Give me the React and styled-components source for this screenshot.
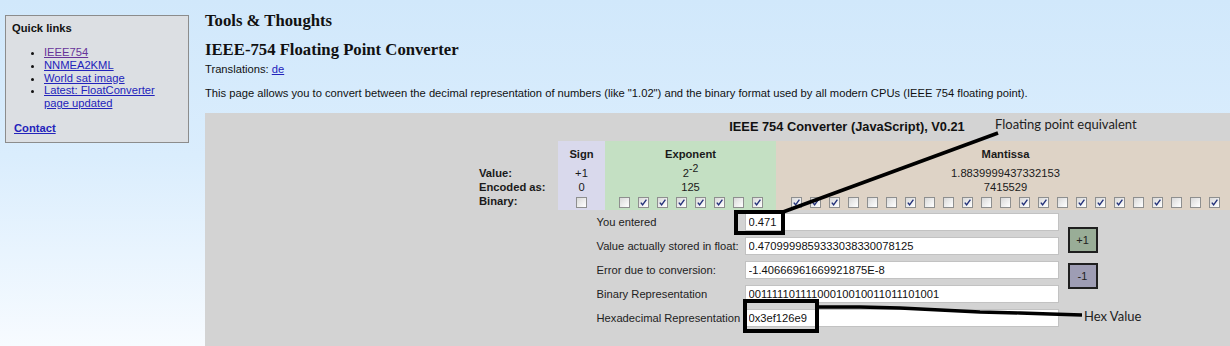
import styled, { createGlobalStyle } from "styled-components";

const GlobalStyle = createGlobalStyle`
  html, body {
    margin: 0;
    padding: 0;
    overflow: hidden;
  }
  body {
    font-family: "Liberation Sans", Arial, sans-serif;
    font-size: 11.2px;
    color: #111;
  }
`;

// bit patterns of 0.471
const exponentBits = [0, 1, 1, 1, 1, 1, 0, 1];
const mantissaBits = [1, 1, 1, 0, 0, 0, 1, 0, 0, 1, 0, 0, 1, 1, 0, 1, 1, 1, 0, 1, 0, 0, 1];

const fields = [
  ["You entered", "0.471"],
  ["Value actually stored in float:", "0.4709999859333038330078125"],
  ["Error due to conversion:", "-1.4066696166992187 5E-8".replace(" ", "")],
  ["Binary Representation", "00111110111100010010011011101001"],
  ["Hexadecimal Representation", "0x3ef126e9"],
];

const colBg = {
  label: "transparent",
  sign: "#d9d9ec",
  exp: "#c4e0c3",
  man: "#ded3c6",
};

const Check = ({ on }) => (
  <Box>
    {on ? (
      <svg width="9" height="9" viewBox="0 0 9 9">
        <path d="M1.8 4.6 L3.6 6.8 L7.4 1.6" fill="none" stroke="#24327a" strokeWidth="1.4" />
      </svg>
    ) : null}
  </Box>
);

const App = () => {
  return (
    <Page>
      <GlobalStyle />
      <Sidebar>
        <SideTitle>Quick links</SideTitle>
        <LinkList>
          <li><Link href="#" $visited>IEEE754</Link></li>
          <li><Link href="#">NNMEA2KML</Link></li>
          <li><Link href="#">World sat image</Link></li>
          <li><Link href="#">Latest: FloatConverter page updated</Link></li>
        </LinkList>
        <Contact href="#">Contact</Contact>
      </Sidebar>

      <Main>
        <SiteTitle>Tools &amp; Thoughts</SiteTitle>
        <PageTitle>IEEE-754 Floating Point Converter</PageTitle>
        <Line $top={2}>Translations: <Link href="#">de</Link></Line>
        <Line $top={10}>
          This page allows you to convert between the decimal representation of numbers (like "1.02") and the binary format used by all modern CPUs (IEEE 754 floating point).
        </Line>

        <Panel>
          <PanelTitle>IEEE 754 Converter (JavaScript), V0.21</PanelTitle>

          <BitTable>
            <Cell $col="label" $h={25} />
            <Cell $col="sign" $h={25} $head>Sign</Cell>
            <Cell $col="exp" $h={25} $head>Exponent</Cell>
            <Cell $col="man" $h={25} $head>Mantissa</Cell>

            <Cell $col="label" $h={14} $bold>Value:</Cell>
            <Cell $col="sign" $h={14}>+1</Cell>
            <Cell $col="exp" $h={14}>2<Sup>-2</Sup></Cell>
            <Cell $col="man" $h={14}>1.8839999437332153</Cell>

            <Cell $col="label" $h={14} $bold>Encoded as:</Cell>
            <Cell $col="sign" $h={14}>0</Cell>
            <Cell $col="exp" $h={14}>125</Cell>
            <Cell $col="man" $h={14}>7415529</Cell>

            <Cell $col="label" $h={16} $bold>Binary:</Cell>
            <Cell $col="sign" $h={16}><Checks><Check on={0} /></Checks></Cell>
            <Cell $col="exp" $h={16}>
              <Checks>{exponentBits.map((b, i) => <Check key={i} on={b} />)}</Checks>
            </Cell>
            <Cell $col="man" $h={16}>
              <Checks>{mantissaBits.map((b, i) => <Check key={i} on={b} />)}</Checks>
            </Cell>
          </BitTable>

          <Form>
            <Rows>
              {fields.map(([label, value]) => (
                <Row key={label}>
                  <span>{label}</span>
                  <Field readOnly value={value} />
                </Row>
              ))}
            </Rows>
            <Buttons>
              <StepButton $bg="#99ad97">+1</StepButton>
              <StepButton $bg="#9e9db4">-1</StepButton>
            </Buttons>
          </Form>
        </Panel>
      </Main>

      {/* hand drawn annotations over the screenshot */}
      <Marks width="1230" height="346" viewBox="0 0 1230 346">
        <rect x="736" y="212" width="47" height="21" fill="none" stroke="#000" strokeWidth="4" />
        <path d="M783 212 L998 133" stroke="#000" strokeWidth="3.6" fill="none" />
        <rect x="745" y="301" width="72" height="30" fill="none" stroke="#000" strokeWidth="4" />
        <polyline
          points="817,307 860,307 900,308 940,310 980,312 1020,313 1050,314 1082,315"
          fill="none"
          stroke="#000"
          strokeWidth="3.4"
        />
      </Marks>
      <Note $x={995} $y={116}>Floating point equivalent</Note>
      <Note $x={1084} $y={308}>Hex Value</Note>
    </Page>
  );
};

const Page = styled.div`
  position: relative;
  display: flex;
  align-items: flex-start;
  width: 1230px;
  height: 346px;
  overflow: hidden;
  background: linear-gradient(180deg, #d1e8fb 0%, #daedfd 45%, #f7fbff 100%);
`;

const Sidebar = styled.aside`
  flex: 0 0 auto;
  width: 170px;
  margin: 15px 0 0 5px;
  padding: 6px 6px 7px;
  background: #dcdfe3;
  border: 1px solid #8c8c8c;
`;

const SideTitle = styled.div`
  font-weight: bold;
  line-height: 13px;
`;

const LinkList = styled.ul`
  margin: 11px 0 0;
  padding: 0 14px 0 32px;
  line-height: 12.8px;
  list-style: disc;
`;

const Link = styled.a`
  color: ${(p) => (p.$visited ? "#663399" : "#2323bb")};
  text-decoration: underline;
`;

const Contact = styled.a`
  display: block;
  margin: 12px 0 0 2px;
  line-height: 13px;
  font-weight: bold;
  color: #2323bb;
  text-decoration: underline;
`;

const Main = styled.main`
  flex: 0 0 auto;
  margin-left: 16px;
`;

const SiteTitle = styled.div`
  margin-top: 11px;
  font-family: "Liberation Serif", "Times New Roman", serif;
  font-weight: bold;
  font-size: 16.7px;
  line-height: 20px;
`;

const PageTitle = styled.h1`
  margin: 9px 0 0;
  font-family: "Liberation Serif", "Times New Roman", serif;
  font-weight: bold;
  font-size: 16.7px;
  line-height: 20px;
`;

const Line = styled.div`
  margin-top: ${(p) => p.$top}px;
  line-height: 14px;
`;

const Panel = styled.section`
  width: 1284px;
  margin-top: 13px;
  padding: 6px 0 30px;
  background: #d3d3d3;
`;

const PanelTitle = styled.div`
  text-align: center;
  font-weight: bold;
  font-size: 12.8px;
  line-height: 16px;
`;

const BitTable = styled.div`
  display: grid;
  grid-template-columns: 99px 47px 171px 459px;
  width: 776px;
  margin: 6px auto 0;
`;

const Cell = styled.div`
  height: ${(p) => p.$h}px;
  box-sizing: border-box;
  padding: ${(p) => (p.$head ? "6px 0 0" : "0")};
  padding-left: ${(p) => (p.$col === "label" ? "20px" : "0")};
  background: ${(p) => colBg[p.$col]};
  text-align: ${(p) => (p.$col === "label" ? "left" : "center")};
  font-weight: ${(p) => (p.$bold || p.$head ? "bold" : "normal")};
  line-height: 14px;
  color: #1a1a1a;
`;

const Sup = styled.sup`
  font-size: 10.5px;
  line-height: 0;
  vertical-align: 5px;
`;

const Checks = styled.div`
  display: flex;
  justify-content: center;
  align-items: center;
  gap: 8px;
  height: 16px;
`;

const Box = styled.span`
  display: flex;
  align-items: center;
  justify-content: center;
  width: 11px;
  height: 11px;
  box-sizing: border-box;
  border: 1px solid #8e8f8f;
  background: linear-gradient(135deg, #d9d9d9 0%, #f4f4f4 70%, #ffffff 100%);
`;

const Form = styled.div`
  display: flex;
  width: 501px;
  margin: 1px auto 0;
`;

const Rows = styled.div`
  display: flex;
  flex-direction: column;
`;

const Row = styled.div`
  display: grid;
  grid-template-columns: 148px 314px;
  align-items: center;
  height: 24px;
  padding-bottom: 2px;
  box-sizing: border-box;
  color: #222;
`;

const Field = styled.input`
  height: 18px;
  box-sizing: border-box;
  margin: 0;
  padding: 0 3px;
  border: 1px solid #c2c2c2;
  background: #fff;
  font-family: "Liberation Sans", Arial, sans-serif;
  font-size: 11.2px;
  color: #111;
  outline: none;
`;

const Buttons = styled.div`
  display: flex;
  flex-direction: column;
  gap: 10px;
  margin-left: 9px;
  padding-top: 16px;
`;

const StepButton = styled.button`
  width: 30px;
  height: 26px;
  box-sizing: border-box;
  padding: 0;
  border: 2px solid #1f1f1f;
  background: ${(p) => p.$bg};
  font-family: "Liberation Sans", Arial, sans-serif;
  font-size: 11px;
  color: #222;
`;

const Marks = styled.svg`
  position: absolute;
  left: 0;
  top: 0;
  pointer-events: none;
`;

const Note = styled.div`
  position: absolute;
  left: ${(p) => p.$x}px;
  top: ${(p) => p.$y}px;
  font-family: Lato, "Open Sans", sans-serif;
  font-size: 13px;
  line-height: 16px;
  color: #222;
  white-space: nowrap;
`;

export default App;
